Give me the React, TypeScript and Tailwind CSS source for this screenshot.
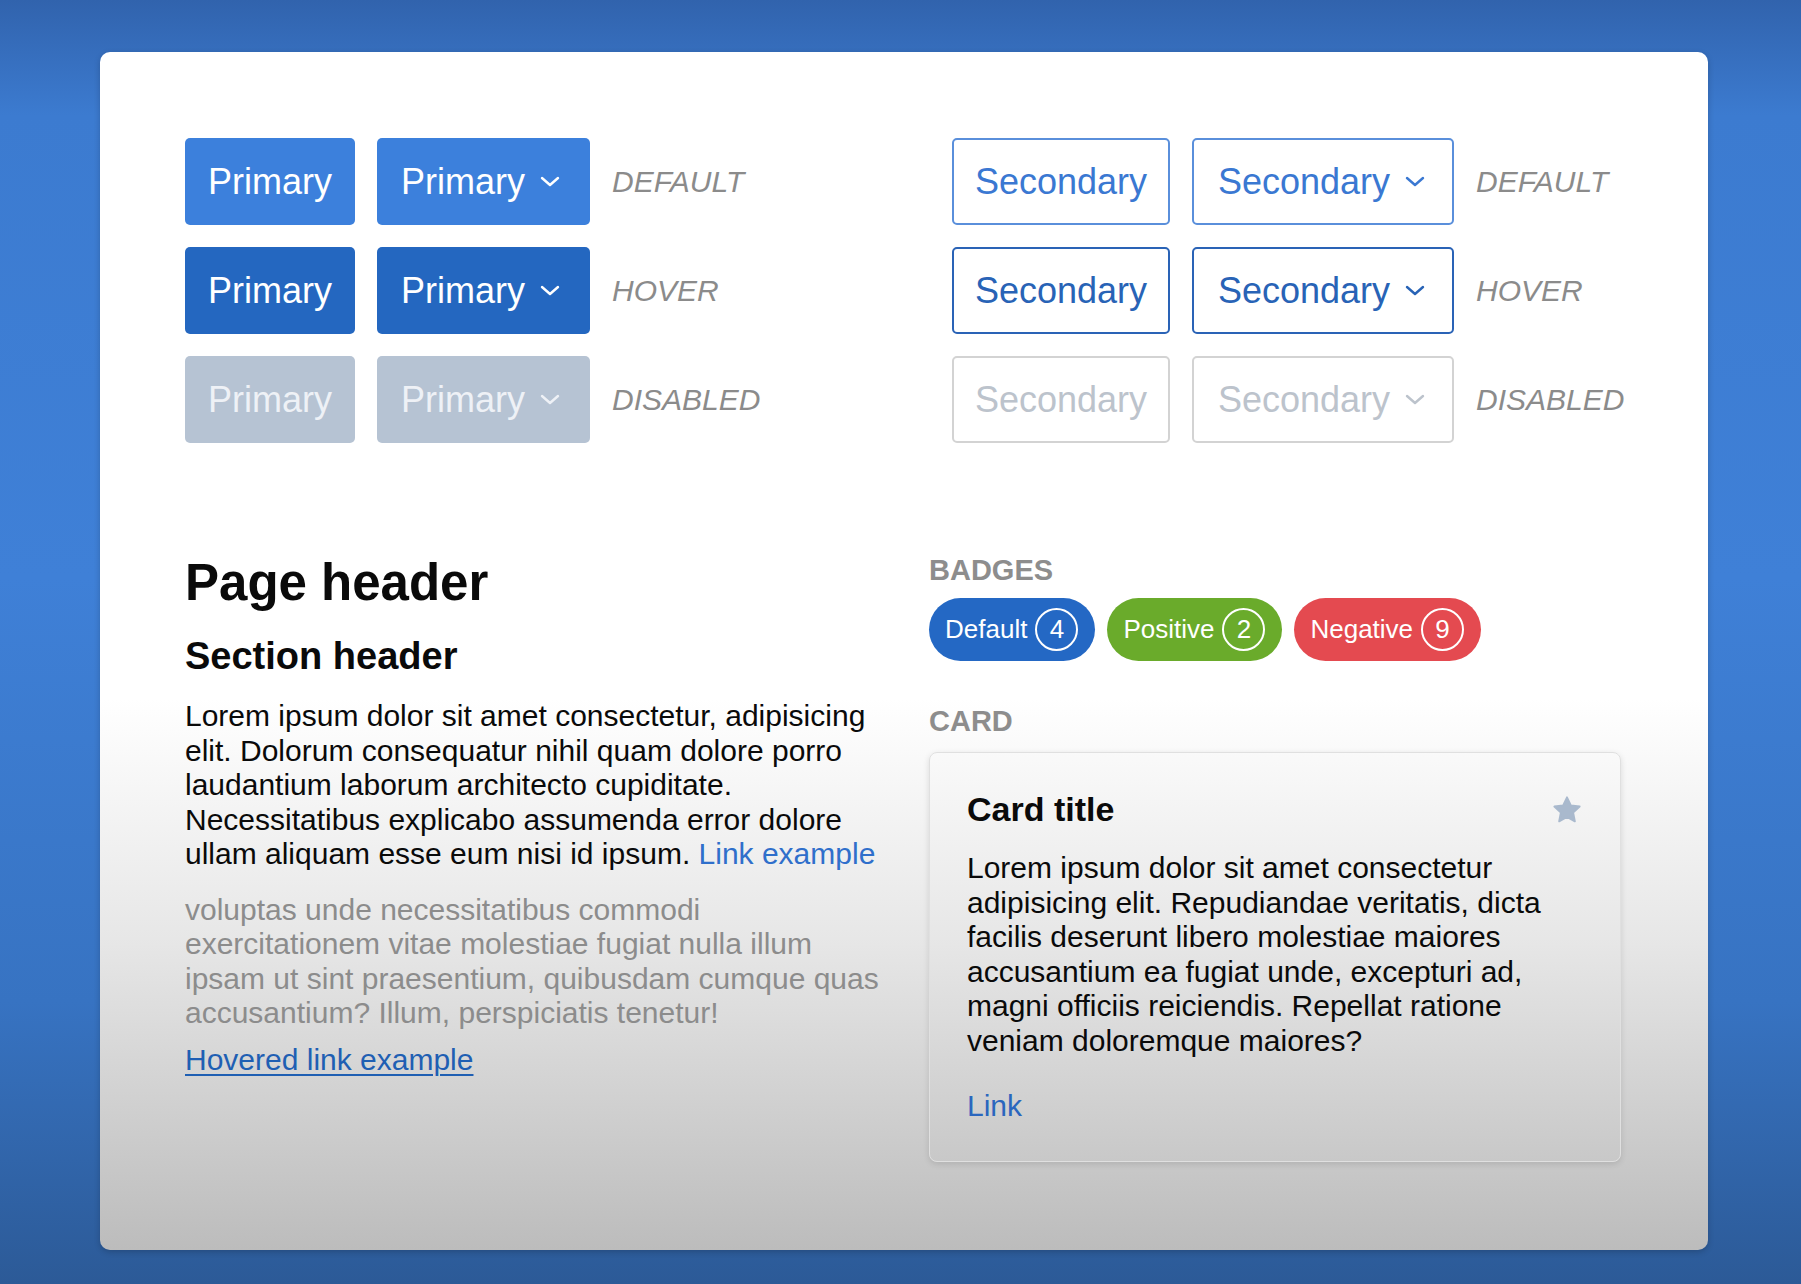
import React from 'react'

type Variant = 'primary' | 'secondary'
type State = 'default' | 'hover' | 'disabled'

const font = "font-['Liberation_Sans',Arial,Helvetica,sans-serif]"

const styles: Record<Variant, Record<State, string>> = {
  primary: {
    default: 'bg-[#3c80dc] text-white',
    hover: 'bg-[#2467c0] text-white',
    disabled: 'bg-[#b6c3d3] text-[#eef1f6]',
  },
  secondary: {
    default: 'border-2 border-[#5a8fdb] text-[#3a78d2]',
    hover: 'border-2 border-[#2a63b6] text-[#2863b6]',
    disabled: 'border-2 border-[#d3d3d3] text-[#bcc3cc]',
  },
}

function Chevron() {
  return (
    <svg width="20" height="11" viewBox="0 0 20 11" fill="none" className="shrink-0">
      <polyline points="2,2 10,9 18,2" stroke="currentColor" strokeWidth="2.4" strokeLinecap="round" strokeLinejoin="round" />
    </svg>
  )
}

function Button({ variant, state, dropdown }: { variant: Variant; state: State; dropdown?: boolean }) {
  const label = variant === 'primary' ? 'Primary' : 'Secondary'
  const width = variant === 'primary' ? (dropdown ? 'w-[213px]' : 'w-[170px]') : dropdown ? 'w-[262px]' : 'w-[218px]'
  return (
    <div
      className={`h-[87px] ${width} shrink-0 rounded-[5px] flex items-center text-[36px] leading-none ${
        dropdown ? 'pl-[24px] gap-[15px]' : 'justify-center'
      } ${styles[variant][state]}`}
    >
      <span>{label}</span>
      {dropdown && <Chevron />}
    </div>
  )
}

function ButtonGroup({ variant, className }: { variant: Variant; className?: string }) {
  const rows: [State, string][] = [
    ['default', 'DEFAULT'],
    ['hover', 'HOVER'],
    ['disabled', 'DISABLED'],
  ]
  return (
    <div className={`flex flex-col gap-[22px] ${className ?? ''}`}>
      {rows.map(([state, text]) => (
        <div key={state} className="flex items-center gap-[22px]">
          <Button variant={variant} state={state} />
          <Button variant={variant} state={state} dropdown />
          <span className="text-[30px] italic text-[#8b8b8b] whitespace-nowrap">{text}</span>
        </div>
      ))}
    </div>
  )
}

function Badge({ label, count, color }: { label: string; count: number; color: string }) {
  return (
    <div className={`h-[63px] rounded-full flex items-center pl-[16px] pr-[17px] gap-[8px] text-white text-[26px] ${color}`}>
      <span>{label}</span>
      <span className="w-[43px] h-[43px] rounded-full border-2 border-white flex items-center justify-center">{count}</span>
    </div>
  )
}

function Star() {
  return (
    <svg width="32" height="32" viewBox="0 0 24 24">
      <polygon
        points="12,2.5 14.9,8.6 21.5,9.4 16.6,13.9 17.9,20.5 12,17.2 6.1,20.5 7.4,13.9 2.5,9.4 9.1,8.6"
        fill="#a9b9cd"
        stroke="#a9b9cd"
        strokeWidth="1.4"
        strokeLinejoin="round"
      />
    </svg>
  )
}

export default function App() {
  return (
    <div
      className={`min-h-screen w-full pt-[52px] pb-[34px] pl-[100px] ${font} bg-[linear-gradient(to_bottom,#3163ad_0%,#3c7bd0_9%,#3f80d7_45%,#3773c2_78%,#2c5a97_100%)]`}
    >
      <div className="w-[1608px] h-[1198px] rounded-[10px] pt-[86px] pl-[85px] pr-[87px] shadow-[0_2px_6px_rgba(0,0,0,0.2)] bg-[linear-gradient(to_bottom,#ffffff_0%,#ffffff_54%,#e7e7e7_74%,#bcbcbc_100%)]">
        {/* Buttons */}
        <div className="flex">
          <ButtonGroup variant="primary" className="w-[767px] shrink-0" />
          <ButtonGroup variant="secondary" className="shrink-0" />
        </div>

        {/* Typography + components */}
        <div className="flex gap-[40px] mt-[110px]">
          <div className="w-[704px] text-[#0a0a0a]">
            <h1 className="text-[51px] font-bold leading-[59px]">Page header</h1>
            <h2 className="text-[38px] font-bold leading-[44px] mt-[22px]">Section header</h2>
            <p className="text-[30px] leading-[34.5px] mt-[21px]">
              Lorem ipsum dolor sit amet consectetur, adipisicing elit. Dolorum consequatur nihil quam dolore porro
              laudantium laborum architecto cupiditate. Necessitatibus explicabo assumenda error dolore ullam aliquam
              esse eum nisi id ipsum. <span className="text-[#2f6fcb]">Link example</span>
            </p>
            <p className="text-[30px] leading-[34.5px] mt-[21px] text-[#8c8c8c]">
              voluptas unde necessitatibus commodi exercitationem vitae molestiae fugiat nulla illum ipsam ut sint
              praesentium, quibusdam cumque quas accusantium? Illum, perspiciatis tenetur!
            </p>
            <div className="text-[30px] leading-[34.5px] mt-[12px]">
              <span className="text-[#1f5fb3] underline underline-offset-[4px] decoration-2">Hovered link example</span>
            </div>
          </div>

          <div className="w-[692px]">
            <div className="text-[29px] font-bold leading-[34px] text-[#8d8d8d]">BADGES</div>
            <div className="flex gap-[12px] mt-[11px]">
              <Badge label="Default" count={4} color="bg-[#2468c4]" />
              <Badge label="Positive" count={2} color="bg-[#6aab2b]" />
              <Badge label="Negative" count={9} color="bg-[#e44a50]" />
            </div>

            <div className="text-[29px] font-bold leading-[34px] text-[#8d8d8d] mt-[43px]">CARD</div>
            <div className="mt-[14px] h-[410px] rounded-[8px] border border-[#e0e0e0] shadow-[0_2px_6px_rgba(0,0,0,0.12)] px-[37px] pt-[37px] text-[#0a0a0a]">
              <div className="flex items-center justify-between">
                <span className="text-[34px] font-bold leading-[39px]">Card title</span>
                <Star />
              </div>
              <p className="text-[30px] leading-[34.5px] mt-[22px]">
                Lorem ipsum dolor sit amet consectetur adipisicing elit. Repudiandae veritatis, dicta facilis deserunt
                libero molestiae maiores accusantium ea fugiat unde, excepturi ad, magni officiis reiciendis. Repellat
                ratione veniam doloremque maiores?
              </p>
              <div className="text-[30px] leading-[34.5px] mt-[31px] text-[#2a66be]">Link</div>
            </div>
          </div>
        </div>
      </div>
    </div>
  )
}
